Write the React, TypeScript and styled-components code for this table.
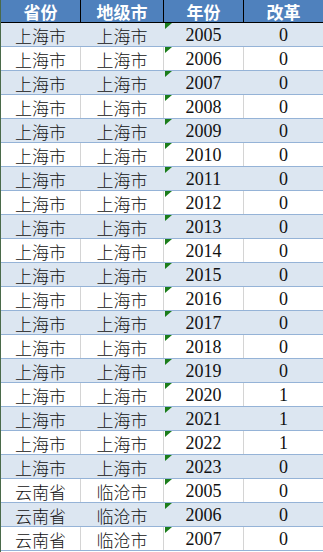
import React from "react";
import styled, { createGlobalStyle } from "styled-components";

const GlobalStyle = createGlobalStyle`
  body {
    margin: 0;
    background: #ffffff;
    overflow: hidden;
  }
`;

const Sheet = styled.div`
  width: 323px;
  height: 552px;
  overflow: hidden;
  border-left: 1px solid #4a6a4a;
  box-sizing: border-box;
`;

const Row = styled.div<{ $shaded?: boolean }>`
  display: grid;
  grid-template-columns: 80px 83px 80px 80px;
  height: 24px;
  box-sizing: border-box;
  border-bottom: 1px solid #95b3d7;
  background: ${(p) => (p.$shaded ? "#dce6f1" : "#ffffff")};
`;

const HeaderRow = styled.div`
  display: grid;
  grid-template-columns: 80px 83px 80px 80px;
  height: 23px;
  box-sizing: border-box;
  border-bottom: 1px solid #000000;
  background: #4f81bd;
`;

const HeadCell = styled.div`
  display: flex;
  align-items: center;
  justify-content: center;
  border-right: 1px solid #000000;
  color: #ffffff;
  font-family: "Noto Sans CJK SC", sans-serif;
  font-weight: 700;
  font-size: 17px;
  line-height: 1;
`;

const Cell = styled.div<{ $shaded?: boolean; $num?: boolean; $flag?: boolean }>`
  position: relative;
  display: flex;
  align-items: center;
  justify-content: center;
  border-right: 1px solid ${(p) => (p.$shaded ? "#dce6f1" : "#d4d4d4")};
  color: #111111;
  font-family: ${(p) =>
    p.$num ? '"Liberation Serif", serif' : '"Noto Sans CJK SC", sans-serif'};
  font-weight: ${(p) => (p.$num ? 400 : 300)};
  font-size: ${(p) => (p.$num ? "18px" : "17px")};
  line-height: 1;
  padding-top: 1px;

  ${(p) =>
    p.$flag &&
    `
    &::before {
      content: "";
      position: absolute;
      left: 1px;
      top: 0;
      width: 0;
      height: 0;
      border-top: 6px solid #1b7d1b;
      border-right: 7px solid transparent;
    }
  `}
`;

type Item = { prov: string; city: string; year: number; reform: number };

const shanghai: Item[] = Array.from({ length: 19 }, (_, i) => {
  const year = 2005 + i;
  return {
    prov: "上海市",
    city: "上海市",
    year,
    reform: year >= 2020 && year <= 2022 ? 1 : 0,
  };
});

const yunnan: Item[] = [2005, 2006, 2007].map((year) => ({
  prov: "云南省",
  city: "临沧市",
  year,
  reform: 0,
}));

const rows = [...shanghai, ...yunnan];

export default function App() {
  return (
    <>
      <GlobalStyle />
      <Sheet>
        <HeaderRow>
          <HeadCell>省份</HeadCell>
          <HeadCell>地级市</HeadCell>
          <HeadCell>年份</HeadCell>
          <HeadCell>改革</HeadCell>
        </HeaderRow>
        {rows.map((r, i) => {
          const shaded = i % 2 === 0;
          return (
            <Row key={i} $shaded={shaded}>
              <Cell $shaded={shaded}>{r.prov}</Cell>
              <Cell $shaded={shaded}>{r.city}</Cell>
              <Cell $shaded={shaded} $num $flag>
                {r.year}
              </Cell>
              <Cell $shaded={shaded} $num>
                {r.reform}
              </Cell>
            </Row>
          );
        })}
      </Sheet>
    </>
  );
}
